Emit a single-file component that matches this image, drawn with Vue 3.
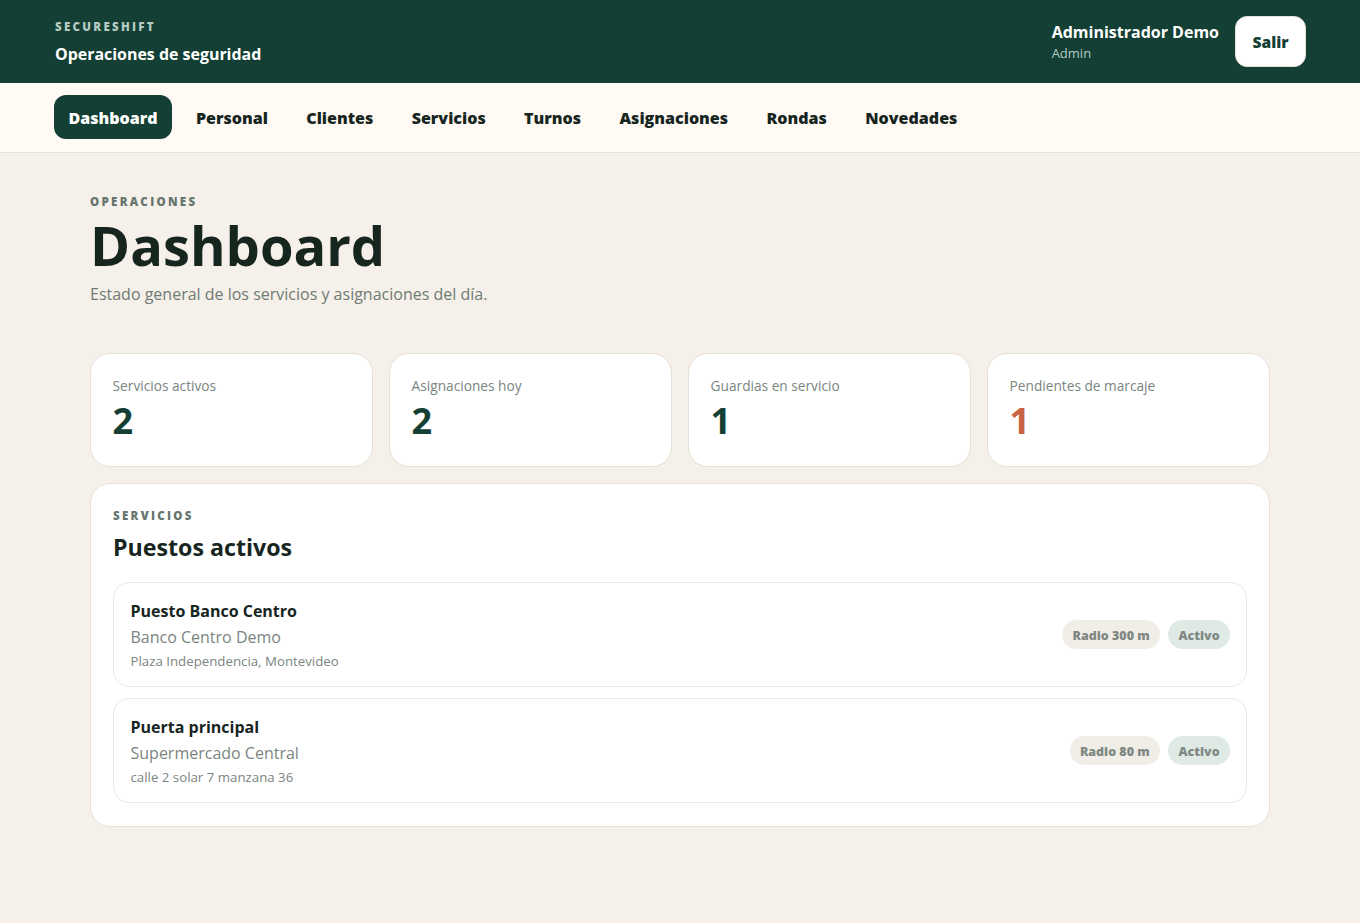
<script setup>
const nav = ['Dashboard','Personal','Clientes','Servicios','Turnos','Asignaciones','Rondas','Novedades']
const stats = [
  { label: 'Servicios activos', value: 2 },
  { label: 'Asignaciones hoy', value: 2 },
  { label: 'Guardias en servicio', value: 1 },
  { label: 'Pendientes de marcaje', value: 1, alert: true },
]
const posts = [
  { name: 'Puesto Banco Centro', client: 'Banco Centro Demo', addr: 'Plaza Independencia, Montevideo', radius: 'Radio 300 m' },
  { name: 'Puerta principal', client: 'Supermercado Central', addr: 'calle 2 solar 7 manzana 36', radius: 'Radio 80 m' },
]
</script>

<template>
  <div class="page">
    <header class="top">
      <div class="brand">
        <div class="brand-kicker">SECURESHIFT</div>
        <div class="brand-title">Operaciones de seguridad</div>
      </div>
      <div class="user">
        <div class="user-info">
          <div class="user-name">Administrador Demo</div>
          <div class="user-role">Admin</div>
        </div>
        <button class="logout">Salir</button>
      </div>
    </header>
    <nav class="nav">
      <a v-for="(n, i) in nav" :key="n" class="nav-item" :class="{ active: i === 0 }">{{ n }}</a>
    </nav>
    <main class="main">
      <section class="head">
        <div class="eyebrow">OPERACIONES</div>
        <h1 class="title">Dashboard</h1>
        <p class="sub">Estado general de los servicios y asignaciones del día.</p>
      </section>
      <section class="stats">
        <div v-for="s in stats" :key="s.label" class="stat">
          <div class="stat-label">{{ s.label }}</div>
          <div class="stat-value" :class="{ alert: s.alert }">{{ s.value }}</div>
        </div>
      </section>
      <section class="panel">
        <div class="eyebrow">SERVICIOS</div>
        <h2 class="panel-title">Puestos activos</h2>
        <div class="rows">
          <article v-for="p in posts" :key="p.name" class="row">
            <div>
              <div class="row-name">{{ p.name }}</div>
              <div class="row-client">{{ p.client }}</div>
              <div class="row-addr">{{ p.addr }}</div>
            </div>
            <div class="chips">
              <span class="chip">{{ p.radius }}</span>
              <span class="chip ok">Activo</span>
            </div>
          </article>
        </div>
      </section>
    </main>
  </div>
</template>

<style>
html, body { margin: 0; background: #f5f0e9; }
</style>

<style scoped>
.page { min-height: 923px; background: #f5f0e9; color: #17251f; font-family: "Open Sans", sans-serif; }
.top { height: 83px; box-sizing: border-box; background: #133f35; padding: 0 54px 0 55px; display: flex; align-items: center; justify-content: space-between; color: #fff; }
.brand-kicker { font-size: 11.5px; font-weight: 800; letter-spacing: 0.2em; line-height: 16px; color: #b5cbc2; padding-top: 1px; }
.brand-title { font-size: 15.95px; font-weight: 700; line-height: 22px; margin-top: 8px; }
.user { display: flex; align-items: center; gap: 16px; }
.user-name { font-size: 16px; font-weight: 700; line-height: 22px; }
.user-role { font-size: 13px; line-height: 18px; color: #b5cbc2; margin-top: 1px; }
.logout { width: 71px; height: 51px; box-sizing: border-box; background: #fff; border: 1px solid #e7e0d6; border-radius: 12px; color: #133f35; font: 800 15.6px "Open Sans", sans-serif; padding: 0; }
.nav { height: 70px; box-sizing: border-box; background: #fffaf4; border-bottom: 1px solid #e7e0d6; padding: 12px 54px 0; display: flex; gap: 9.6px; align-items: flex-start; }
.nav-item { height: 44px; box-sizing: border-box; padding: 12px 14.4px 0; line-height: 22px; border-radius: 12px; font-size: 16.05px; font-weight: 800; color: #17251f; }
.nav-item.active { background: #133f35; color: #fff; }
.main { width: 1180px; margin: 0 auto; padding-top: 41px; }
.eyebrow { font-size: 11.5px; font-weight: 800; letter-spacing: 0.2em; line-height: 16px; color: #66756d; }
.title { margin: 3px 0 0; font-size: 54.25px; font-weight: 700; line-height: 65px; color: #17251f; }
.sub { margin: 4px 0 0; font-size: 16px; line-height: 24px; color: #6f7b74; }
.head { margin-bottom: 47px; }
.stats { display: grid; grid-template-columns: repeat(4, 1fr); gap: 16px; }
.stat { height: 114px; box-sizing: border-box; background: #fff; border: 1px solid #e7e0d6; border-radius: 20px; padding: 22px 21.6px; }
.stat-label { font-size: 13.7px; line-height: 20px; color: #7a8580; }
.stat-value { font-size: 36px; font-weight: 700; line-height: 49px; color: #133f35; }
.stat-value.alert { color: #c96143; }
.panel { margin-top: 16px; height: 344px; box-sizing: border-box; background: #fff; border: 1px solid #e7e0d6; border-radius: 20px; padding: 24px 22px 22px; }
.panel-title { margin: 7px 0 0; font-size: 23.2px; font-weight: 700; line-height: 33px; color: #17251f; }
.rows { display: flex; flex-direction: column; gap: 11px; margin-top: 18px; }
.row { height: 105px; box-sizing: border-box; border: 1px solid #eee8df; border-radius: 16px; padding: 0 16px 0 16.5px; display: flex; align-items: center; justify-content: space-between; }
.row-name { font-size: 16px; font-weight: 700; line-height: 22px; color: #17251f; }
.row-client { font-size: 16px; line-height: 22px; color: #7a8580; margin-top: 4px; }
.row-addr { font-size: 13.28px; line-height: 18px; color: #7a8580; margin-top: 4px; }
.chips { display: flex; gap: 8px; }
.chip { height: 29px; box-sizing: border-box; padding: 7px 10.4px 0; line-height: 18px; border-radius: 15px; background: #f1eee7; color: #7f8884; font-size: 12.48px; font-weight: 800; }
.chip.ok { background: #dfeae5; }
</style>
